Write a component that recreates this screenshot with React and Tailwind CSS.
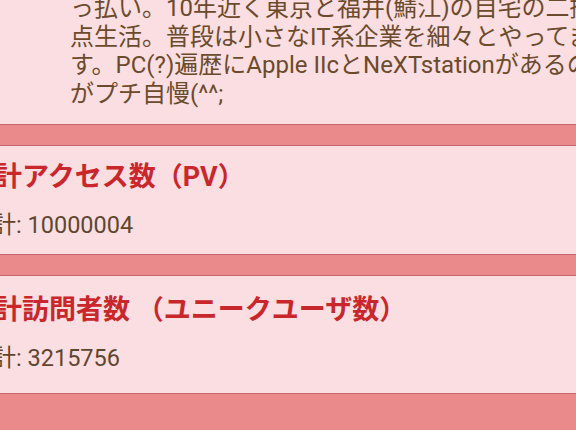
export default function App() {
  const font = { fontFamily: 'Roboto, "Noto Sans CJK JP", sans-serif' };
  const lines = [
    "っ払い。10年近く東京と福井(鯖江)の自宅の二拠",
    "点生活。普段は小さなIT系企業を細々とやってます",
    "す。PC(?)遍歴にApple IIcとNeXTstationがあるの",
    "がプチ自慢(^^;",
  ];
  return (
    <div className="w-[576px] h-[430px] overflow-hidden bg-[#ea8a8b]" style={font}>
      <div className="flex flex-col gap-[20px]">
        <div className="mt-[-6px] bg-[#fadee1] border-b border-[#c66668] pl-[70px] pb-[16px] text-[24px] leading-[28.5px] text-[#6b4b2c]">
          {lines.map((l, i) => (
            <div key={i} className="whitespace-nowrap">{l}</div>
          ))}
        </div>
        <div className="bg-[#fadee1] border-y border-[#c66668] pt-[14px] pb-[14px]">
          <div className="ml-[-32px] whitespace-nowrap text-[27px] leading-[34px] font-bold text-[#c9272b]">累計アクセス数（PV）</div>
          <div className="ml-[-31px] mt-[16px] whitespace-nowrap text-[23.5px] leading-[30px] text-[#5e4731]">合計: 10000004</div>
        </div>
        <div className="bg-[#fadee1] border-y border-[#c66668] pt-[17px] pb-[20px]">
          <div className="ml-[-32px] whitespace-nowrap text-[27px] leading-[34px] font-bold text-[#c9272b]">累計訪問者数 （ユニークユーザ数）</div>
          <div className="ml-[-31px] mt-[16px] whitespace-nowrap text-[23.5px] leading-[30px] text-[#5e4731]">合計: 3215756</div>
        </div>
      </div>
    </div>
  );
}
